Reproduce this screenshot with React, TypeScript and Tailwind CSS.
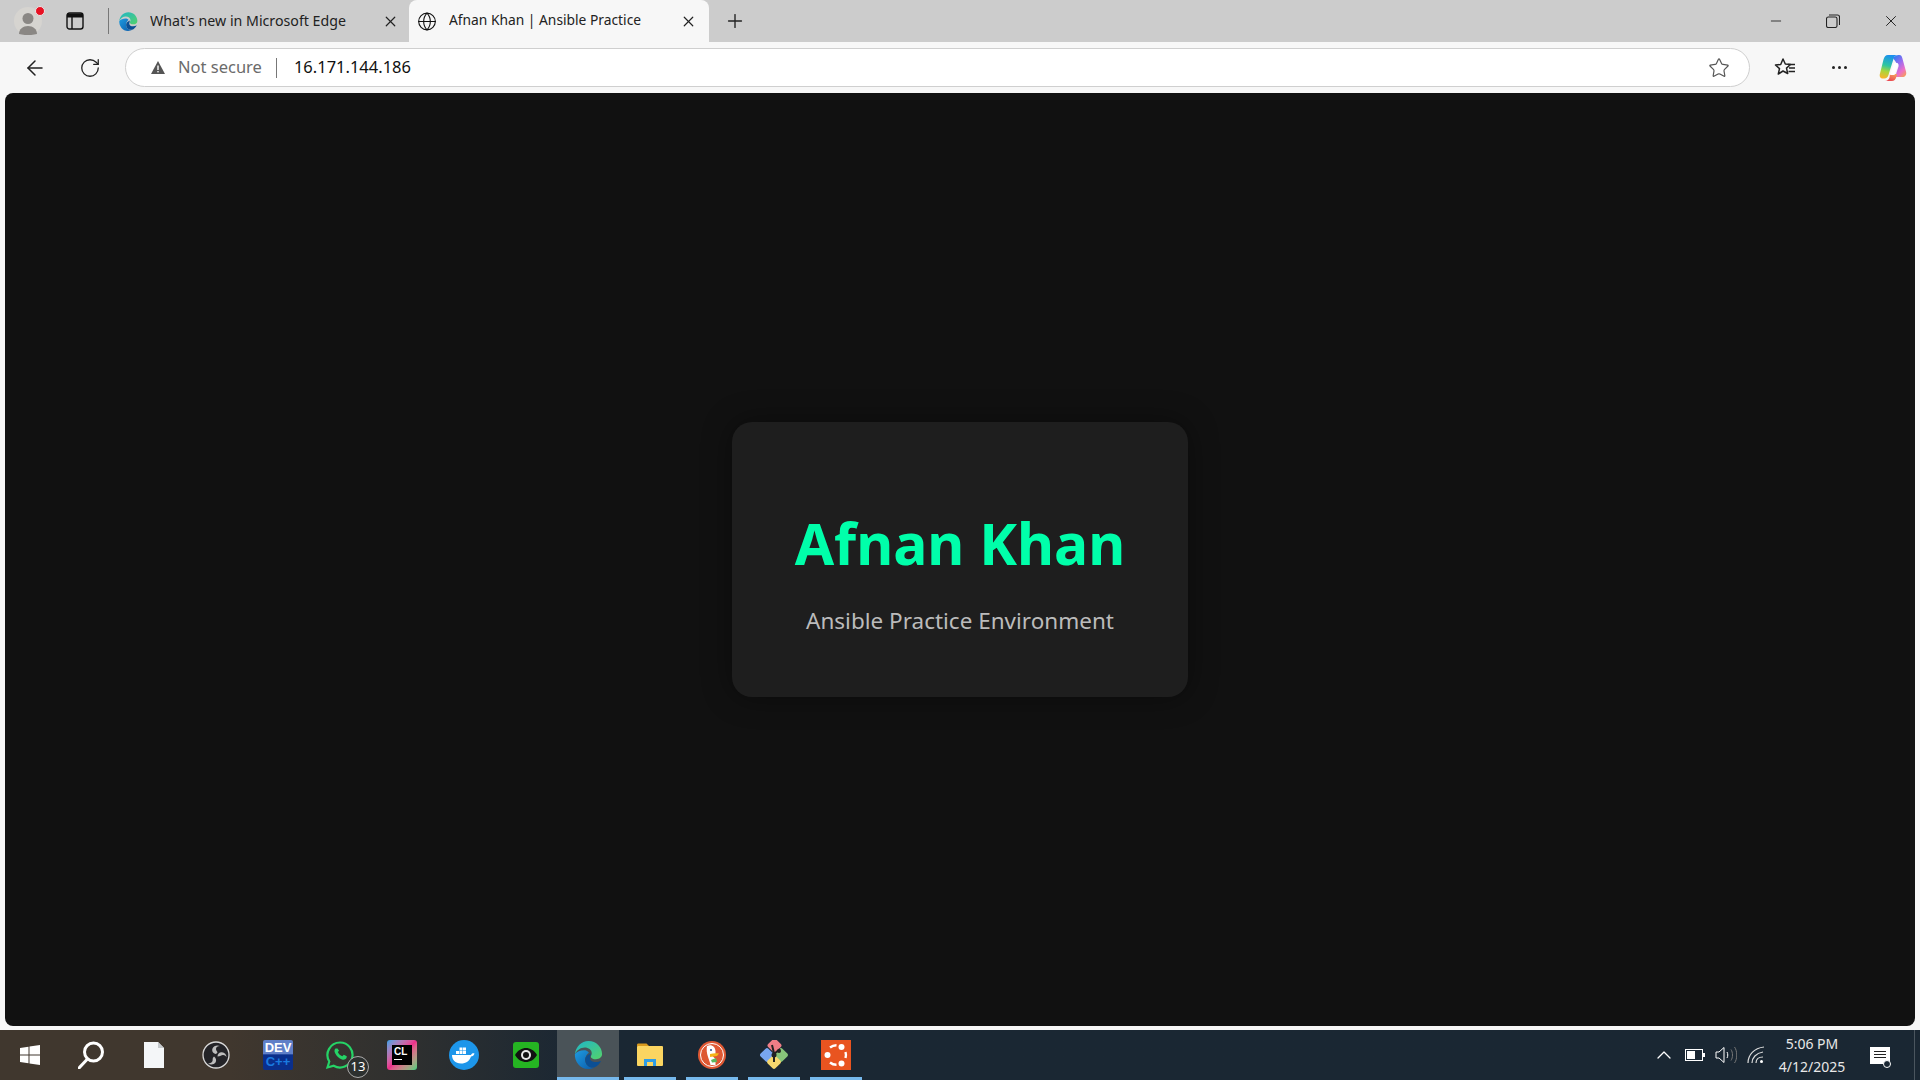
import { Minus, Plus, X, ArrowLeft, RotateCw, Star, Globe, ChevronUp } from "lucide-react";
import type { ReactNode } from "react";

const uiFont = "font-['Noto_Sans','Open_Sans',sans-serif]";

function EdgeLogo({ size }: { size: number }) {
  return (
    <svg width={size} height={size} viewBox="0 0 32 32">
      <defs>
        <linearGradient id={`edgeA${size}`} x1="0" y1="0" x2="1" y2="1">
          <stop offset="0" stopColor="#1fb6c9" />
          <stop offset="1" stopColor="#54d26a" />
        </linearGradient>
        <linearGradient id={`edgeB${size}`} x1="0" y1="0" x2="1" y2="1">
          <stop offset="0" stopColor="#1f9be0" />
          <stop offset="1" stopColor="#0a5cab" />
        </linearGradient>
      </defs>
      <path d="M2 15C3 7 9 1 16.500 1 25 1 31 7.500 31 15c0 3.500-3 5.500-6.500 5.500-3 0-5.500-1-5.500-3 0-1 1-1.500 1-3.500C20 10.500 16.500 8 12.500 8 8 8 4 11 2 15z" fill={`url(#edgeA${size})`} />
      <path d="M2 15c-.5 8 5.500 16 14 16 2.500 0 5-.7 6.500-1.700C17 30 13 26 13 21c0-3 1.500-6 4-7.500C15.500 11.500 13.500 11 12 11c-4 0-8 1.500-10 4z" fill={`url(#edgeB${size})`} />
      <path d="M13 21c0 5 4 9 9.500 8.300 3-1 6-3.800 7.500-7.300-1.500 1-3.500 1.500-6 1.500-3 0-6-1-6-4.500 0-1.500 1-3 1-4.500-3 1-6 3.500-6 6.500z" fill="#0b4f94" />
    </svg>
  );
}

function CopilotLogo() {
  return (
    <svg width="28" height="28" viewBox="0 0 28 28">
      <defs>
        <linearGradient id="copA" x1="0.5" y1="0" x2="0.3" y2="1">
          <stop offset="0" stopColor="#1a8ff0" />
          <stop offset="0.45" stopColor="#2fc6a0" />
          <stop offset="0.7" stopColor="#a8d63c" />
          <stop offset="1" stopColor="#f7b52c" />
        </linearGradient>
        <linearGradient id="copB" x1="0.2" y1="0" x2="0.8" y2="1">
          <stop offset="0" stopColor="#2f7cf0" />
          <stop offset="0.4" stopColor="#9a6cf0" />
          <stop offset="0.75" stopColor="#ee70c8" />
          <stop offset="1" stopColor="#f59a60" />
        </linearGradient>
        <linearGradient id="copC" x1="0.8" y1="0" x2="0.2" y2="1">
          <stop offset="0" stopColor="#f4a060" />
          <stop offset="1" stopColor="#ea3f4e" />
        </linearGradient>
      </defs>
      <path d="M9 1h10c-2 0-3.500 1-4.200 3L11 16l-1.500 5c-.7 2-2 3.500-4 3.500h-1.500C1.500 24.500 0 22.500 1 19.500L4.500 5.500C5.300 2.800 6.500 1 9 1z" fill="url(#copA)" />
      <path d="M14 4c2-2.500 5-3 6.500-3 1.500 0 2.300 1 2.800 3L27 17.500c1 3.500-1 5.500-3.500 5.500h-7.500l3.500-10.500c.6-2-.5-3.500-2-3.500z" fill="url(#copB)" />
      <path d="M11 20h7l-.5 2.500c-.8 3-2.500 4.500-4.500 4.500H6c2.500 0 3.800-1.500 4.500-3.500z" fill="url(#copC)" />
      <path d="M15 9h2.800c1 0 1.500 1 1.200 2.200L15.500 21h-4.500z" fill="#fff" />
    </svg>
  );
}

function Tab({ icon, title, active }: { icon: ReactNode; title: string; active?: boolean }) {
  return (
    <div
      className={
        active
          ? "flex h-[42px] w-[300px] shrink-0 items-center self-end rounded-t-[8px] bg-[#f7f7f7] pl-[8px]"
          : "flex h-[42px] w-[298px] shrink-0 items-center pl-[7px]"
      }
    >
      <div className="flex w-[20px] shrink-0 justify-center">{icon}</div>
      <span
        className={
          active
            ? `ml-[12px] w-[231px] shrink-0 truncate pb-[1px] text-[13.800px] text-[#222] ${uiFont}`
            : `ml-[12px] w-[232px] shrink-0 truncate pb-[1px] text-[14.200px] text-[#222] ${uiFont}`
        }
      >
        {title}
      </span>
      <X size={17} strokeWidth={1.700} className="shrink-0 text-[#222]" />
    </div>
  );
}

function TitleBar() {
  return (
    <div className="flex h-[42px] shrink-0 items-center bg-[#cccccc]">
      <div className="relative ml-[14px] flex size-[28px] items-end justify-center rounded-full bg-[#d6d4d0]">
        <svg width="22" height="24" viewBox="0 0 22 24">
          <circle cx="11" cy="7.500" r="5.500" fill="#8a8784" />
          <path d="M2 23c0-5 4-8 9-8s9 3 9 8c-5 1.500-13 1.500-18 0z" fill="#8a8784" />
        </svg>
        <span className="absolute right-[-3px] top-[-1px] size-[10px] rounded-full border border-[#e8e8e8] bg-[#e81123]" />
      </div>
      <svg className="ml-[24px]" width="18" height="18" viewBox="0 0 18 18" fill="none" stroke="#111" strokeWidth="1.400">
        <rect x="1" y="1" width="16" height="16" rx="2.500" />
        <path d="M1 3.500h16" strokeWidth="4" />
        <path d="M6 5v12" />
      </svg>
      <div className="ml-[24px] h-[26px] w-px bg-[#777]" />
      <div className="ml-[2px] flex items-center">
        <Tab icon={<EdgeLogo size={21} />} title="What's new in Microsoft Edge" />
        <Tab active icon={<Globe size={21} strokeWidth={1.300} className="text-[#111]" />} title="Afnan Khan | Ansible Practice" />
      </div>
      <Plus size={22} strokeWidth={1.500} className="ml-[15px] text-[#222]" />
      <div className="ml-auto flex items-center">
        <Minus size={16} strokeWidth={1.300} className="mr-[42px] text-[#222]" />
        <svg className="mr-[42px]" width="14" height="14" viewBox="0 0 14 14" fill="none" stroke="#222" strokeWidth="1.100">
          <rect x="0.500" y="3" width="10.500" height="10.500" rx="1.800" />
          <path d="M3 1h8.500c1 0 2 1 2 2v8" />
        </svg>
        <X size={18} strokeWidth={1.300} className="mr-[20px] text-[#222]" />
      </div>
    </div>
  );
}

function Toolbar() {
  return (
    <div className="flex h-[51px] shrink-0 items-center bg-[#f7f7f7]">
      <ArrowLeft size={24} strokeWidth={1.500} className="ml-[23px] text-[#222]" />
      <RotateCw size={22} strokeWidth={1.400} className="ml-[32px] text-[#222]" />
      <div className="ml-[24px] flex h-[39px] w-[1625px] items-center rounded-full border border-[#cfcfcf] bg-white">
        <svg className="ml-[24px]" width="16" height="15" viewBox="0 0 16 15">
          <path d="M8 1l7 13H1z" fill="#555" />
          <rect x="7.300" y="5.500" width="1.400" height="4.500" fill="#fff" />
          <rect x="7.300" y="11" width="1.400" height="1.400" fill="#fff" />
        </svg>
        <span className={`ml-[12px] text-[16.500px] text-[#6b6b6b] ${uiFont}`}>Not secure</span>
        <div className="ml-[14px] h-[20px] w-px bg-[#777]" />
        <span className={`ml-[17px] text-[16.500px] text-[#111] ${uiFont}`}>16.171.144.186</span>
        <Star size={22} strokeWidth={1.300} className="ml-auto mr-[19px] text-[#555]" />
      </div>
      <svg className="ml-[24px]" width="22" height="22" viewBox="0 0 22 22" fill="none" stroke="#222" strokeWidth="1.500">
        <path d="M9 2l2.300 5 5.200.5-4 3.600 1.200 5.400L9 14l-4.700 3 1.200-5.400-4-3.600 5.200-.5z" strokeLinejoin="round" />
        <path d="M14 7.500h7M15 11h6M14.500 14.500h6.500" />
      </svg>
      <div className="ml-[36px] flex gap-[3px]">
        <span className="size-[3px] rounded-full bg-[#222]" />
        <span className="size-[3px] rounded-full bg-[#222]" />
        <span className="size-[3px] rounded-full bg-[#222]" />
      </div>
      <div className="ml-[32px]">
        <CopilotLogo />
      </div>
    </div>
  );
}

function Page() {
  return (
    <div className="flex min-h-0 flex-1 bg-[#f7f7f7] px-[5px]">
      <div className="flex flex-1 items-center justify-center rounded-[8px] bg-[#111111]">
        <div className="w-[456px] rounded-[20px] bg-[#1e1e1e] pb-[60px] pt-[83px] text-center shadow-[0_0_30px_rgba(0,0,0,0.4)]">
          <h1 className={`text-[57px] font-bold leading-[76px] text-[#00ffaa] ${uiFont}`}>Afnan Khan</h1>
          <p className={`mt-[24px] text-[22.500px] leading-[32px] text-[#bbbbbb] ${uiFont}`}>Ansible Practice Environment</p>
        </div>
      </div>
    </div>
  );
}

const taskIcons: { icon: ReactNode; state?: "active" | "open" }[] = [
  {
    icon: (
      <svg width="20" height="20" viewBox="0 0 20 20" fill="#fff">
        <path d="M0 3l8.500-1.200v7.700H0zM9.500 1.600L20 0v9.500H9.500zM0 10.500h8.500v7.700L0 17zM9.500 10.500H20V20L9.500 18.400z" />
      </svg>
    ),
  },
  {
    icon: (
      <svg width="28" height="28" viewBox="0 0 28 28" fill="none" stroke="#fff" strokeWidth="3">
        <circle cx="15.500" cy="11" r="9" />
        <path d="M9.500 18L1 27" strokeLinecap="round" />
      </svg>
    ),
  },
  {
    icon: (
      <svg width="20" height="26" viewBox="0 0 20 26">
        <path d="M0 0h14l6 6v20H0z" fill="#f4f6f8" />
        <path d="M14 0l6 6h-6z" fill="#c5c9cc" />
      </svg>
    ),
  },
  {
    icon: (
      <svg width="28" height="28" viewBox="0 0 28 28" fill="none">
        <circle cx="14" cy="14" r="13" fill="#232327" stroke="#d8d8d8" strokeWidth="1.300" />
        <path d="M14 13c-3-.5-4.500-3-3.500-5.500S15 3.500 18 5c-2.500 0-4 1-4 3 0 1.500 1 2 1.500 3.500zM15.500 15.500c0-2.500 2-4.500 4.500-4.200s4.500 2.200 4.500 5c-1-1.800-2.800-2.800-4.500-2-1.300.4-2 1.200-4.500 1.200zM12 15.500c2 1.500 2.800 4 1.500 6s-4.800 2.800-7.500 1c2.500 0 4-1 4.500-2.500.5-1.500-.5-2.800 1.500-4.500z" fill="#bdbdbd" />
      </svg>
    ),
  },
  {
    icon: (
      <div className="flex h-[30px] w-[30px] flex-col items-center justify-center rounded-[2px] bg-gradient-to-b from-[#5f7fc8] from-[45%] to-[#0a2f8c] to-[50%] font-['Liberation_Sans',sans-serif] text-[13px] font-bold leading-[14px]">
        <span className="text-white">DEV</span>
        <span className="text-[#1a7be0]">C++</span>
      </div>
    ),
  },
  {
    icon: (
      <div className="relative">
        <svg width="30" height="30" viewBox="0 0 30 30" fill="none">
          <path d="M15 2.500A12.500 12.500 0 0 0 4.300 21.500L2.500 27.500l6.200-1.700A12.500 12.500 0 1 0 15 2.500z" stroke="#25d366" strokeWidth="2.200" />
          <path d="M10.500 8.500c-1 1-1.500 2.500-.5 4.500 1.500 3 4 5.500 7 6.500 2 .5 3.500 0 4.500-1.500l.3-1.700-3-1.500-1.500 1.500c-2-.7-3.500-2.300-4.500-4.300l1.300-1.300L12.500 8.500z" fill="#25d366" />
        </svg>
        <span className={`absolute bottom-[-8px] right-[-14px] flex size-[22px] items-center justify-center rounded-full border border-[#aaa] bg-[#2c302f] text-[13px] text-white ${uiFont}`}>
          13
        </span>
      </div>
    ),
  },
  {
    icon: (
      <div className="relative size-[30px] rounded-[3px] bg-gradient-to-br from-[#19a0e8] via-[#ee2e8b] to-[#16d07c]">
        <div className="absolute inset-[5px] bg-black pl-[2px] pt-[1px] font-['Liberation_Sans',sans-serif] text-[10px] font-bold leading-[11px] text-white">
          CL
          <div className="mt-[2px] h-[1px] w-[8px] bg-white" />
        </div>
      </div>
    ),
  },
  {
    icon: (
      <svg width="30" height="30" viewBox="0 0 30 30">
        <circle cx="15" cy="15" r="15" fill="#1d96ea" />
        <path d="M3 15h19c.5-1.500 2-2 3.500-1.500-.5 2-2 3-3.500 3-1.500 4.500-5 7-10 7-6 0-9-4-9-8.500z" fill="#fff" />
        <path d="M7 11h3v3H7zM10.500 11h3v3h-3zM14 11h3v3h-3zM10.500 7.500h3v3h-3zM14 7.500h3v3h-3z" fill="#fff" />
      </svg>
    ),
  },
  {
    icon: (
      <div className="flex h-[26px] w-[26px] items-center justify-center rounded-[3px] bg-[#25b522]">
        <svg width="22" height="14" viewBox="0 0 22 14">
          <path d="M0 7c3-5 7-7 11-7s8 2 11 7c-3 5-7 7-11 7S3 12 0 7z" fill="#111" />
          <circle cx="11" cy="7" r="5" fill="#e8e8e8" />
          <circle cx="11" cy="7" r="3" fill="#111" />
        </svg>
      </div>
    ),
  },
  { icon: <EdgeLogo size={30} />, state: "active" },
  {
    icon: (
      <svg width="28" height="24" viewBox="0 0 28 24">
        <path d="M1 2c0-1 .5-1.500 1.500-1.500h8l3 3H1z" fill="#d99a1e" />
        <rect x="1" y="3" width="26" height="20" rx="1" fill="#fbd561" />
        <path d="M8 23v-7h12v7h-3v-4h-6v4z" fill="#2f9de6" />
      </svg>
    ),
    state: "open",
  },
  {
    icon: (
      <svg width="28" height="28" viewBox="0 0 28 28">
        <circle cx="14" cy="14" r="14" fill="#de5833" />
        <circle cx="14" cy="14" r="11.500" fill="none" stroke="#fff" strokeWidth="1" />
        <path d="M9 5c4-2 8 0 8.500 5v3h-3v2l3 3v6h-5c-1-6-5-11-3.500-19z" fill="#fff" />
        <path d="M12 13c3-1 7-1 9-.5l-2 2.500-7 1z" fill="#f5b518" />
        <path d="M13 19l5-2 1 4-5 .5z" fill="#5bb75b" />
        <circle cx="13" cy="9" r="1" fill="#2d4f8e" />
      </svg>
    ),
    state: "open",
  },
  {
    icon: (
      <svg width="30" height="30" viewBox="0 0 30 30">
        <rect x="10" y="0" width="11" height="11" rx="2" transform="rotate(45 15.500 5.500)" fill="#ef7d86" />
        <rect x="2.500" y="9.500" width="11" height="11" rx="2" transform="rotate(45 8 15)" fill="#78a6f0" />
        <rect x="16.500" y="9.500" width="11" height="11" rx="2" transform="rotate(45 22 15)" fill="#87c47a" />
        <rect x="9.500" y="16.500" width="11" height="11" rx="2" transform="rotate(45 15 22)" fill="#f5d76e" />
        <path d="M13 5l2 8v9M15 14l6-5" stroke="#222" strokeWidth="2" fill="none" />
        <circle cx="15" cy="15" r="2.500" fill="#222" />
        <circle cx="20" cy="11" r="2" fill="#222" />
      </svg>
    ),
    state: "open",
  },
  {
    icon: (
      <div className="flex size-[30px] items-center justify-center bg-[#e95420]">
        <svg width="30" height="30" viewBox="0 0 30 30" fill="none" stroke="#fff" strokeWidth="2.400">
          <path d="M9 7.500A10 10 0 0 1 15.500 5.200M24.500 12A10 10 0 0 1 24.500 18M15.500 24.800A10 10 0 0 1 9 22.500" />
          <circle cx="6.500" cy="15" r="3" fill="#fff" stroke="none" />
          <circle cx="20.500" cy="7" r="3" fill="#fff" stroke="none" />
          <circle cx="20.500" cy="23.500" r="3" fill="#fff" stroke="none" />
        </svg>
      </div>
    ),
    state: "open",
  },
];

function TaskCell({ icon, state }: { icon: ReactNode; state?: "active" | "open" }) {
  return (
    <div
      className={
        state === "active"
          ? "relative flex h-[50px] w-[62px] shrink-0 items-center justify-center bg-[#4a5358]"
          : "relative flex h-[50px] w-[62px] shrink-0 items-center justify-center"
      }
    >
      {icon}
      {state === "active" && <span className="absolute inset-x-0 bottom-0 h-[3px] bg-[#76b9ed]" />}
      {state === "open" && <span className="absolute inset-x-[5px] bottom-0 h-[3px] bg-[#76b9ed]" />}
    </div>
  );
}

function Taskbar() {
  return (
    <div className="flex h-[50px] shrink-0 items-center bg-gradient-to-r from-[#40372e] from-[12%] via-[#2f302f] via-[21%] to-[#1a2733] to-[30%]">
      <div className="ml-[-1px] flex">
        {taskIcons.map((t, i) => (
          <TaskCell key={i} icon={t.icon} state={t.state} />
        ))}
      </div>
      <div className="ml-auto flex items-center">
        <ChevronUp size={24} strokeWidth={1.300} className="text-white" />
        <svg className="ml-[9px]" width="20" height="12" viewBox="0 0 20 12" fill="none">
          <rect x="0.500" y="0.500" width="17" height="11" stroke="#fff" />
          <rect x="2" y="2" width="8" height="8" fill="#fff" />
          <rect x="18" y="4" width="2" height="4" fill="#fff" />
        </svg>
        <svg className="ml-[10px]" width="22" height="18" viewBox="0 0 22 18" fill="none" stroke="#fff" strokeWidth="1">
          <path d="M1 6h3l5-4.500v15L4 12H1z" />
          <path d="M12 6c1 1.500 1 4.500 0 6" />
          <path d="M16 3.500c2 3 2 8 0 11M19.500 1c3 4 3 12 0 16" stroke="#777" />
        </svg>
        <svg className="ml-[10px]" width="20" height="18" viewBox="0 0 20 18" fill="none" stroke="#ddd" strokeWidth="1.200">
          <path d="M1 17C1 9 7 2 17 1M5 17c0-5 4-10 11-11M9 17c0-3 2-6 7-6" />
          <circle cx="14.500" cy="15.500" r="1.500" fill="#fff" stroke="none" />
        </svg>
        <div className={`ml-[8px] w-[74px] text-center text-[14px] leading-[23px] text-[#e8e8e8] ${uiFont}`}>
          <div>5:06 PM</div>
          <div>4/12/2025</div>
        </div>
        <div className="relative ml-[21px] h-[17px] w-[20px] bg-white">
          <div className="mx-auto mt-[4px] h-[1px] w-[12px] bg-[#222]" />
          <div className="mx-auto mt-[2px] h-[1px] w-[12px] bg-[#222]" />
          <div className="mx-auto mt-[2px] h-[1px] w-[12px] bg-[#222]" />
          <span className="absolute bottom-[-4px] right-[-1px] size-[8px] rounded-full border border-white bg-[#1a2733]" />
        </div>
        <div className="ml-[24px] mr-[5px] h-[50px] w-px bg-[#4a555e]" />
      </div>
    </div>
  );
}

export default function App() {
  return (
    <div className="flex h-screen w-full flex-col overflow-hidden bg-[#f7f7f7]">
      <TitleBar />
      <Toolbar />
      <Page />
      <div className="h-[4px] shrink-0 bg-[#f7f7f7]" />
      <Taskbar />
    </div>
  );
}
